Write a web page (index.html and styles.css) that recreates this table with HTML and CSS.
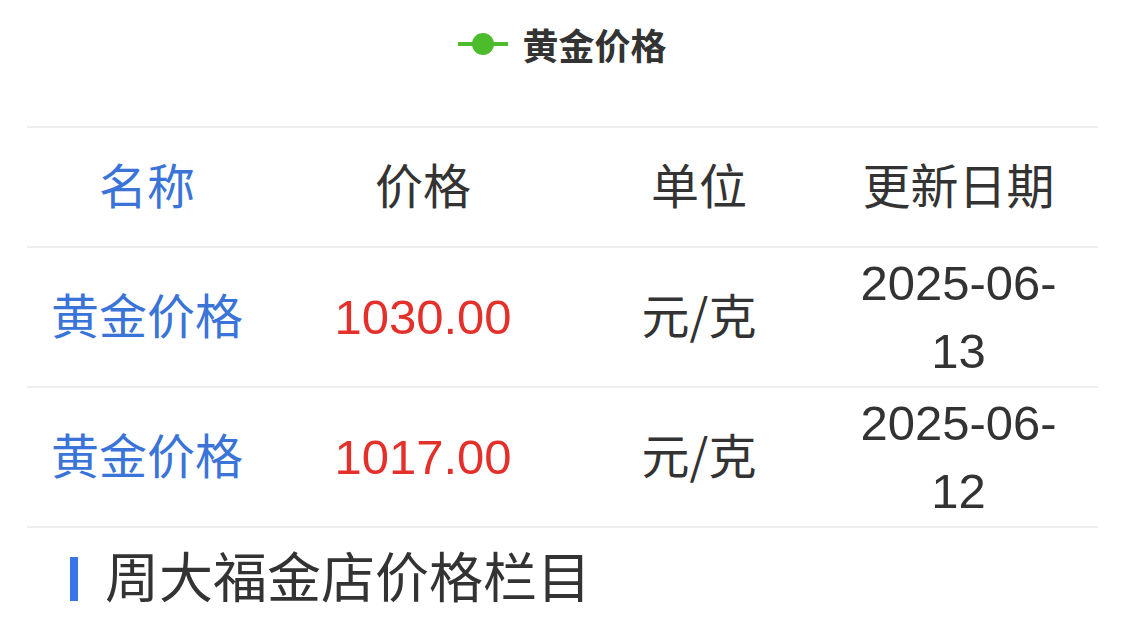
FILE: index.html
```html
<!DOCTYPE html>
<html lang="zh-CN">
<head>
<meta charset="utf-8">
<title>黄金价格</title>
<link rel="stylesheet" href="styles.css">
</head>
<body>
<div class="page">
  <div class="heading">
    <svg class="heading-icon" width="50" height="24" viewBox="0 0 50 24">
      <rect x="0" y="10" width="50" height="4" fill="#4cbb2c"/>
      <circle cx="25" cy="12" r="11" fill="#4cbb2c"/>
    </svg>
    <span class="heading-text">黄金价格</span>
  </div>
  <table class="prices">
    <colgroup>
      <col class="c1"><col class="c2"><col class="c3"><col class="c4">
    </colgroup>
    <thead>
      <tr class="head-row">
        <th class="blue">名称</th>
        <th>价格</th>
        <th>单位</th>
        <th>更新日期</th>
      </tr>
    </thead>
    <tbody>
      <tr>
        <td class="blue cjk">黄金价格</td>
        <td class="red num">1030.00</td>
        <td class="cjk">元/克</td>
        <td class="num">2025-06-<br>13</td>
      </tr>
      <tr>
        <td class="blue cjk">黄金价格</td>
        <td class="red num">1017.00</td>
        <td class="cjk">元/克</td>
        <td class="num">2025-06-<br>12</td>
      </tr>
    </tbody>
  </table>
  <div class="section-title">
    <span class="bar"></span>
    <span class="section-text">周大福金店价格栏目</span>
  </div>
</div>
</body>
</html>
```
FILE: styles.css
```css
html, body {
  margin: 0;
  padding: 0;
  background: #ffffff;
}
body {
  font-family: "Liberation Sans", "Noto Sans CJK SC", sans-serif;
  color: #333333;
}
.page {
  padding: 0 27px;
}
.heading {
  display: flex;
  align-items: center;
  justify-content: center;
  gap: 14px;
  height: 50px;
  margin-top: 19px;
  margin-bottom: 57px;
}
.heading-icon {
  display: block;
}
.heading-text {
  font-family: "Noto Sans CJK SC", sans-serif;
  font-size: 36px;
  font-weight: 700;
  color: #333333;
  line-height: 50px;
}
.prices {
  width: 100%;
  border-collapse: collapse;
  table-layout: fixed;
  border-top: 2px solid #eeeeee;
}
.c1 { width: 240px; }
.c2 { width: 312px; }
.c3 { width: 240px; }
.c4 { width: 279px; }
.prices th, .prices td {
  text-align: center;
  vertical-align: middle;
  font-family: "Noto Sans CJK SC", sans-serif;
  font-size: 48px;
  font-weight: 400;
  color: #333333;
  padding: 1px 0;
  line-height: 68px;
  border-bottom: 2px solid #eeeeee;
}
.head-row {
  height: 120px;
}
.prices th,
.prices .cjk {
  padding: 0 0 8px;
}
.prices .num {
  font-family: "Liberation Sans", "Noto Sans CJK SC", sans-serif;
  font-size: 49px;
}
.prices .blue {
  color: #3a74d8;
}
.prices .red {
  color: #e3302b;
}
.section-title {
  display: flex;
  align-items: center;
  gap: 27px;
  padding-left: 43px;
  margin-top: 12px;
  height: 70px;
}
.bar {
  display: block;
  width: 8px;
  height: 44px;
  margin-top: 8px;
  background: #3b74e6;
}
.section-text {
  font-family: "Noto Sans CJK SC", sans-serif;
  font-size: 54px;
  letter-spacing: 0;
  color: #333333;
  line-height: 70px;
}
```
